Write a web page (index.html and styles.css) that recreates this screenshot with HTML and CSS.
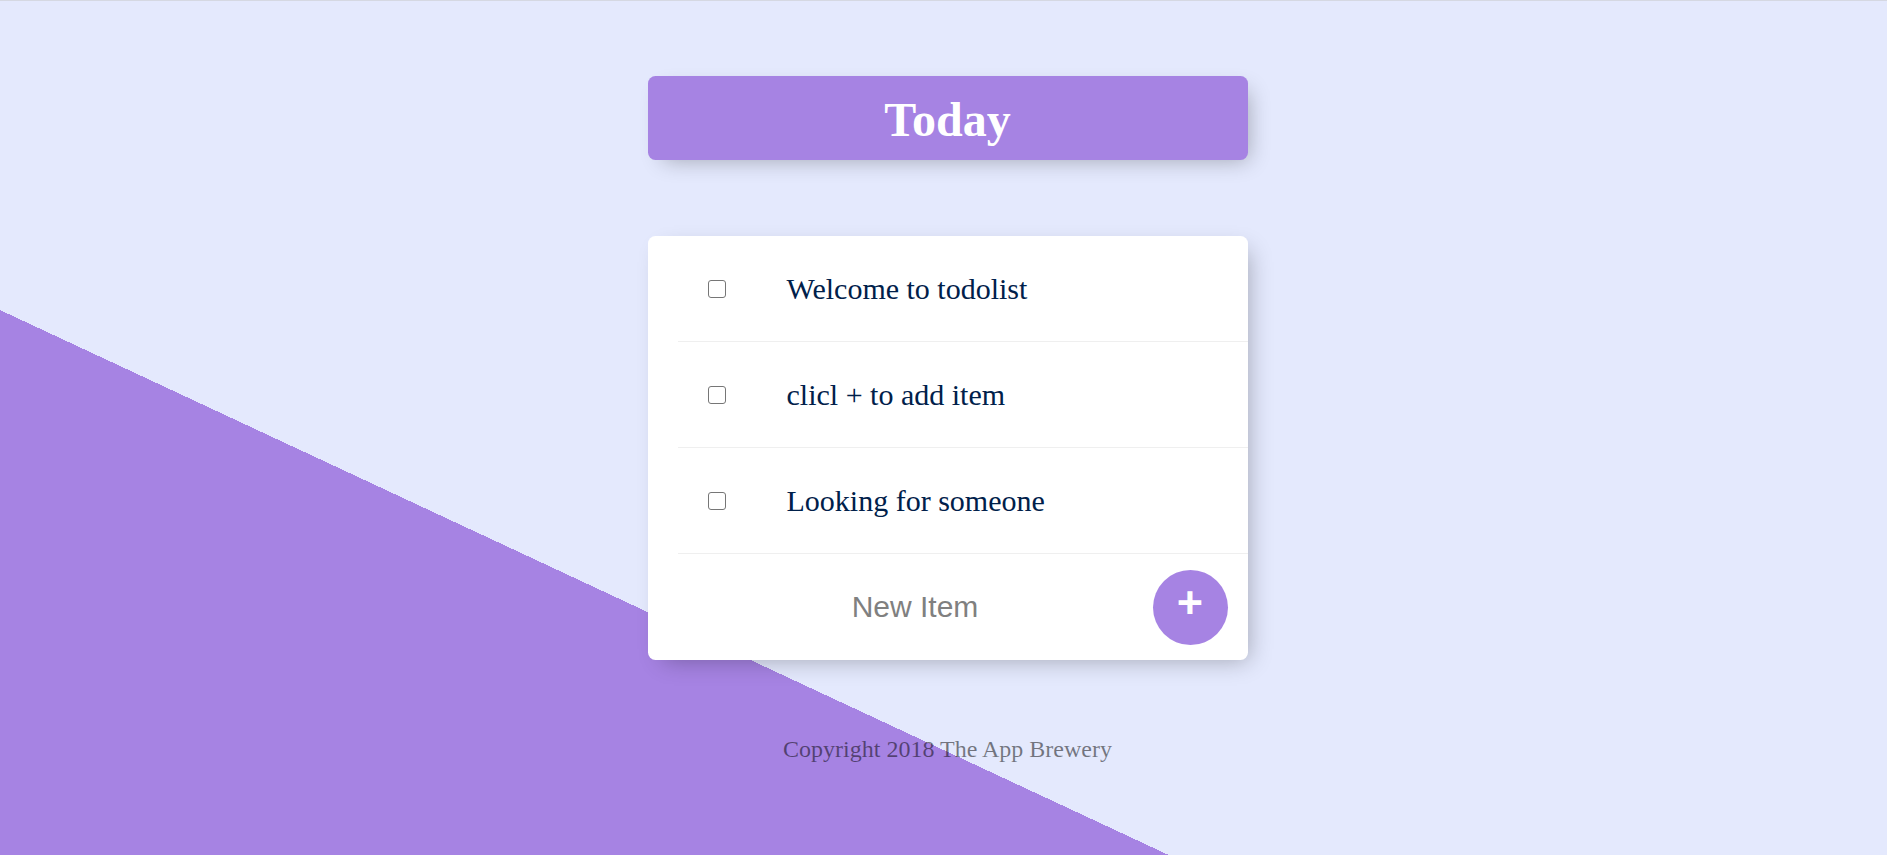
FILE: index.html
```html
<!DOCTYPE html>
<html lang="en">
<head>
<meta charset="utf-8">
<title>To Do List</title>
<link rel="stylesheet" href="styles.css">
</head>
<body>
  <div class="box heading">
    <h1 class="heading-title">Today</h1>
  </div>

  <div class="box card">
    <div class="item">
      <input class="check" type="checkbox">
      <p class="item-text">Welcome to todolist</p>
    </div>
    <div class="item">
      <input class="check" type="checkbox">
      <p class="item-text">clicl + to add item</p>
    </div>
    <div class="item">
      <input class="check" type="checkbox">
      <p class="item-text">Looking for someone</p>
    </div>
    <form class="item new-form">
      <input class="new-input" type="text" name="newItem" placeholder="New Item" autocomplete="off">
      <button class="add-btn" type="submit" name="list">+</button>
    </form>
  </div>

  <footer class="footer">Copyright 2018 The App Brewery</footer>
</body>
</html>
```

FILE: styles.css
```css
html {
  border-top: 1px solid #d5d8e2;
  background: linear-gradient(25deg, #A683E3 50%, #E4E9FD 50%) 0 0 / 100% 1498px no-repeat, #E4E9FD;
  min-height: 100%;
}

body {
  margin: 0;
  padding: 0 0 0 8px;
  font-family: "Liberation Serif", "Times New Roman", serif;
}

.box {
  width: 600px;
  margin: 0 auto;
  background: #ffffff;
  border-radius: 7.5px;
  box-shadow: 7.5px 7.5px 22.5px -7.5px rgba(0, 0, 0, 0.3);
}

.heading {
  margin-top: 75px;
  background: #A683E3;
  text-align: center;
}

.heading-title {
  margin: 0;
  height: 84px;
  line-height: 88px;
  font-size: 48px;
  font-weight: 700;
  color: #ffffff;
  font-family: "Liberation Serif", "Times New Roman", serif;
}

.card {
  margin-top: 76px;
}

.item {
  min-height: 105px;
  margin-left: 30px;
  display: flex;
  align-items: center;
  border-bottom: 1px solid #EFEFEF;
}

.item:last-child {
  border-bottom: 0;
}

.check {
  -webkit-appearance: none;
  appearance: none;
  box-sizing: border-box;
  width: 18px;
  height: 18px;
  margin: 0 30px;
  border: 1.5px solid #767676;
  border-radius: 3px;
  background: #ffffff;
  flex: none;
}

.item-text {
  margin: 0;
  padding: 30px 30px 30px 31px;
  font-size: 30px;
  color: #00204a;
}

.new-form {
  min-height: 106px;
}

.new-input {
  width: 475px;
  height: 90px;
  padding: 0;
  border: none;
  background: transparent;
  text-align: center;
  font-family: "Liberation Sans", Arial, sans-serif;
  font-size: 30px;
  color: #333;
  outline: none;
}

.new-input::placeholder {
  color: grey;
  opacity: 1;
}

.add-btn {
  flex: none;
  width: 75px;
  height: 75px;
  border-radius: 50%;
  border: 0;
  padding: 0 0 9px 0;
  background: #A683E3;
  color: #ffffff;
  font-family: "Liberation Sans", Arial, sans-serif;
  font-size: 45px;
  font-weight: 700;
  line-height: 1;
}

.footer {
  margin-top: 76px;
  text-align: center;
  font-size: 24px;
  color: rgba(0, 0, 0, 0.5);
}
```
